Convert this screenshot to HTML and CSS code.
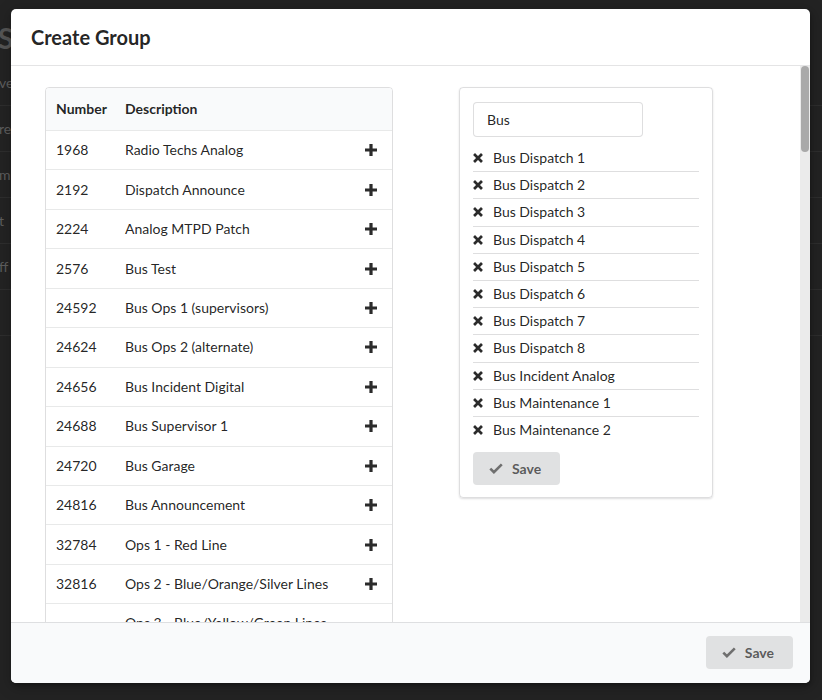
FILE: index.html
```html
<!DOCTYPE html>
<html lang="en">
<head>
<meta charset="utf-8">
<title>Create Group</title>
<link rel="stylesheet" href="styles.css">
</head>
<body>
<div class="bg-page">
  <div class="bg-title">S</div>
  <div class="bg-row">ve</div>
  <div class="bg-row">re</div>
  <div class="bg-row">m</div>
  <div class="bg-row">t</div>
  <div class="bg-row">ff</div>
  <div class="bg-row"></div>
</div>

<div class="modal">
  <div class="modal-header">Create Group</div>
  <div class="modal-body">
    <div class="scroll">
      <div class="table-wrap">
        <table class="talk-table">
          <colgroup><col class="c-num"><col><col class="c-act"></colgroup>
          <thead>
            <tr><th>Number</th><th>Description</th><th></th></tr>
          </thead>
          <tbody>
            <tr><td>1968</td><td>Radio Techs Analog</td><td class="act"><svg class="plus" viewBox="0 0 12 12"><path d="M4.4 0h3.2v4.4H12v3.2H7.6V12H4.4V7.6H0V4.4h4.4z"/></svg></td></tr>
            <tr><td>2192</td><td>Dispatch Announce</td><td class="act"><svg class="plus" viewBox="0 0 12 12"><path d="M4.4 0h3.2v4.4H12v3.2H7.6V12H4.4V7.6H0V4.4h4.4z"/></svg></td></tr>
            <tr><td>2224</td><td>Analog MTPD Patch</td><td class="act"><svg class="plus" viewBox="0 0 12 12"><path d="M4.4 0h3.2v4.4H12v3.2H7.6V12H4.4V7.6H0V4.4h4.4z"/></svg></td></tr>
            <tr><td>2576</td><td>Bus Test</td><td class="act"><svg class="plus" viewBox="0 0 12 12"><path d="M4.4 0h3.2v4.4H12v3.2H7.6V12H4.4V7.6H0V4.4h4.4z"/></svg></td></tr>
            <tr><td>24592</td><td>Bus Ops 1 (supervisors)</td><td class="act"><svg class="plus" viewBox="0 0 12 12"><path d="M4.4 0h3.2v4.4H12v3.2H7.6V12H4.4V7.6H0V4.4h4.4z"/></svg></td></tr>
            <tr><td>24624</td><td>Bus Ops 2 (alternate)</td><td class="act"><svg class="plus" viewBox="0 0 12 12"><path d="M4.4 0h3.2v4.4H12v3.2H7.6V12H4.4V7.6H0V4.4h4.4z"/></svg></td></tr>
            <tr><td>24656</td><td>Bus Incident Digital</td><td class="act"><svg class="plus" viewBox="0 0 12 12"><path d="M4.4 0h3.2v4.4H12v3.2H7.6V12H4.4V7.6H0V4.4h4.4z"/></svg></td></tr>
            <tr><td>24688</td><td>Bus Supervisor 1</td><td class="act"><svg class="plus" viewBox="0 0 12 12"><path d="M4.4 0h3.2v4.4H12v3.2H7.6V12H4.4V7.6H0V4.4h4.4z"/></svg></td></tr>
            <tr><td>24720</td><td>Bus Garage</td><td class="act"><svg class="plus" viewBox="0 0 12 12"><path d="M4.4 0h3.2v4.4H12v3.2H7.6V12H4.4V7.6H0V4.4h4.4z"/></svg></td></tr>
            <tr><td>24816</td><td>Bus Announcement</td><td class="act"><svg class="plus" viewBox="0 0 12 12"><path d="M4.4 0h3.2v4.4H12v3.2H7.6V12H4.4V7.6H0V4.4h4.4z"/></svg></td></tr>
            <tr><td>32784</td><td>Ops 1 - Red Line</td><td class="act"><svg class="plus" viewBox="0 0 12 12"><path d="M4.4 0h3.2v4.4H12v3.2H7.6V12H4.4V7.6H0V4.4h4.4z"/></svg></td></tr>
            <tr><td>32816</td><td>Ops 2 - Blue/Orange/Silver Lines</td><td class="act"><svg class="plus" viewBox="0 0 12 12"><path d="M4.4 0h3.2v4.4H12v3.2H7.6V12H4.4V7.6H0V4.4h4.4z"/></svg></td></tr>
            <tr><td>32848</td><td>Ops 3 - Blue/Yellow/Green Lines<br>(combined)</td><td class="act"><svg class="plus" viewBox="0 0 12 12"><path d="M4.4 0h3.2v4.4H12v3.2H7.6V12H4.4V7.6H0V4.4h4.4z"/></svg></td></tr>
          </tbody>
        </table>
      </div>

      <div class="segment">
        <input class="search" type="text" value="Bus">
        <ul class="sel-list">
          <li><svg class="x" viewBox="0 0 10 10"><path d="M2 2l6 6M8 2L2 8"/></svg><span>Bus Dispatch 1</span></li>
          <li><svg class="x" viewBox="0 0 10 10"><path d="M2 2l6 6M8 2L2 8"/></svg><span>Bus Dispatch 2</span></li>
          <li><svg class="x" viewBox="0 0 10 10"><path d="M2 2l6 6M8 2L2 8"/></svg><span>Bus Dispatch 3</span></li>
          <li><svg class="x" viewBox="0 0 10 10"><path d="M2 2l6 6M8 2L2 8"/></svg><span>Bus Dispatch 4</span></li>
          <li><svg class="x" viewBox="0 0 10 10"><path d="M2 2l6 6M8 2L2 8"/></svg><span>Bus Dispatch 5</span></li>
          <li><svg class="x" viewBox="0 0 10 10"><path d="M2 2l6 6M8 2L2 8"/></svg><span>Bus Dispatch 6</span></li>
          <li><svg class="x" viewBox="0 0 10 10"><path d="M2 2l6 6M8 2L2 8"/></svg><span>Bus Dispatch 7</span></li>
          <li><svg class="x" viewBox="0 0 10 10"><path d="M2 2l6 6M8 2L2 8"/></svg><span>Bus Dispatch 8</span></li>
          <li><svg class="x" viewBox="0 0 10 10"><path d="M2 2l6 6M8 2L2 8"/></svg><span>Bus Incident Analog</span></li>
          <li><svg class="x" viewBox="0 0 10 10"><path d="M2 2l6 6M8 2L2 8"/></svg><span>Bus Maintenance 1</span></li>
          <li><svg class="x" viewBox="0 0 10 10"><path d="M2 2l6 6M8 2L2 8"/></svg><span>Bus Maintenance 2</span></li>
        </ul>
        <button class="btn" type="button"><svg class="check" viewBox="0 0 14 11"><path d="M1.3 5.6l3.6 3.6L12.8 1.3"/></svg><span>Save</span></button>
      </div>
    </div>
    <div class="scrollbar"><div class="thumb"></div></div>
  </div>
  <div class="modal-footer">
    <button class="btn" type="button"><svg class="check" viewBox="0 0 14 11"><path d="M1.3 5.6l3.6 3.6L12.8 1.3"/></svg><span>Save</span></button>
  </div>
</div>
</body>
</html>
```

FILE: styles.css
```css
* {
  box-sizing: border-box;
}

html, body {
  margin: 0;
  padding: 0;
}

body {
  width: 822px;
  height: 700px;
  overflow: hidden;
  background: #232323;
  font-family: Lato, "Open Sans", "Liberation Sans", sans-serif;
  font-size: 14px;
  color: rgba(0, 0, 0, 0.87);
}

/* dimmed page behind the modal */
.bg-page {
  color: #5e5e5e;
}

.bg-title {
  height: 60px;
  padding-top: 16px;
  font-size: 28px;
  line-height: 44px;
  font-weight: 700;
  color: #555;
  margin-left: -2px;
}

.bg-row {
  height: 46px;
  line-height: 46px;
  font-size: 14px;
  border-bottom: 1px solid #2e2e2e;
  margin-left: -1px;
}

/* modal */
.modal {
  position: absolute;
  top: 9px;
  left: 11px;
  width: 799px;
  height: 674px;
  background: #fff;
  border-radius: 5px;
  overflow: hidden;
  display: flex;
  flex-direction: column;
  box-shadow: 1px 3px 3px 0 rgba(0, 0, 0, 0.2), 1px 3px 15px 2px rgba(0, 0, 0, 0.2);
}

.modal-header {
  flex: 0 0 57px;
  display: flex;
  align-items: center;
  padding: 0 20px;
  border-bottom: 1px solid rgba(34, 36, 38, 0.12);
  font-size: 20px;
  font-weight: 700;
  color: rgba(0, 0, 0, 0.87);
}

.modal-body {
  flex: 1;
  min-height: 0;
  display: flex;
}

.scroll {
  flex: 1;
  overflow: hidden;
  padding: 21px 0 0 34px;
  display: flex;
  align-items: flex-start;
  gap: 66px;
}

.scrollbar {
  flex: 0 0 10px;
  background: #ebebeb;
  padding: 0 1px;
}

.thumb {
  height: 86px;
  background: #a9a9a9;
  border-radius: 5px;
}

/* table */
.table-wrap {
  flex: 0 0 348px;
  border: 1px solid rgba(34, 36, 38, 0.15);
  border-radius: 4px;
  overflow: hidden;
}

.talk-table {
  width: 100%;
  border-collapse: separate;
  border-spacing: 0;
  table-layout: fixed;
}

.c-num {
  width: 69px;
}

.c-act {
  width: 38px;
}

.talk-table th {
  background: #f9fafb;
  text-align: left;
  font-weight: 700;
  padding: 10.5px 10px 11.5px;
  line-height: 20px;
}

.talk-table td {
  border-top: 1px solid rgba(34, 36, 38, 0.1);
  padding: 9.22px 10px;
  line-height: 20px;
  vertical-align: middle;
}

.talk-table td.act {
  padding: 0 15px 0 10px;
}

.plus {
  display: block;
  width: 12px;
  height: 12px;
  margin-left: auto;
  fill: #2b2b2b;
}

/* selected segment */
.segment {
  flex: 0 0 254px;
  border: 1px solid rgba(34, 36, 38, 0.15);
  border-radius: 4px;
  box-shadow: 0 1px 2px 0 rgba(34, 36, 38, 0.15);
  padding: 14px 13px 12px;
}

.search {
  display: block;
  width: 170px;
  height: 35px;
  padding: 0 13px;
  border: 1px solid rgba(34, 36, 38, 0.15);
  border-radius: 4px;
  font-family: inherit;
  font-size: 14px;
  color: rgba(0, 0, 0, 0.87);
  outline: none;
}

.sel-list {
  list-style: none;
  margin: 8px 0 0;
  padding: 0;
}

.sel-list li {
  display: flex;
  align-items: center;
  padding: 3.1px 0;
  line-height: 20px;
}

.sel-list li + li {
  border-top: 1px solid rgba(34, 36, 38, 0.15);
}

.x {
  flex: 0 0 10px;
  width: 10px;
  height: 10px;
  margin-right: 10px;
  fill: none;
  stroke: #2b2b2b;
  stroke-width: 2.7;
  stroke-linecap: square;
}

/* buttons */
.btn {
  display: inline-flex;
  align-items: center;
  gap: 9px;
  height: 33px;
  padding: 0 19px 0 16px;
  border: 0;
  border-radius: 4px;
  background: #e0e1e2;
  font-family: inherit;
  font-size: 14px;
  font-weight: 700;
  color: rgba(0, 0, 0, 0.62);
}

.segment .btn {
  margin-top: 9px;
}

.check {
  width: 14px;
  height: 11px;
  fill: none;
  stroke: #6f6f6f;
  stroke-width: 2.6;
}

.modal-footer {
  flex: 0 0 61px;
  display: flex;
  justify-content: flex-end;
  align-items: center;
  padding: 0 17px 1px;
  background: #f9fafb;
  border-top: 1px solid rgba(34, 36, 38, 0.12);
}
```
